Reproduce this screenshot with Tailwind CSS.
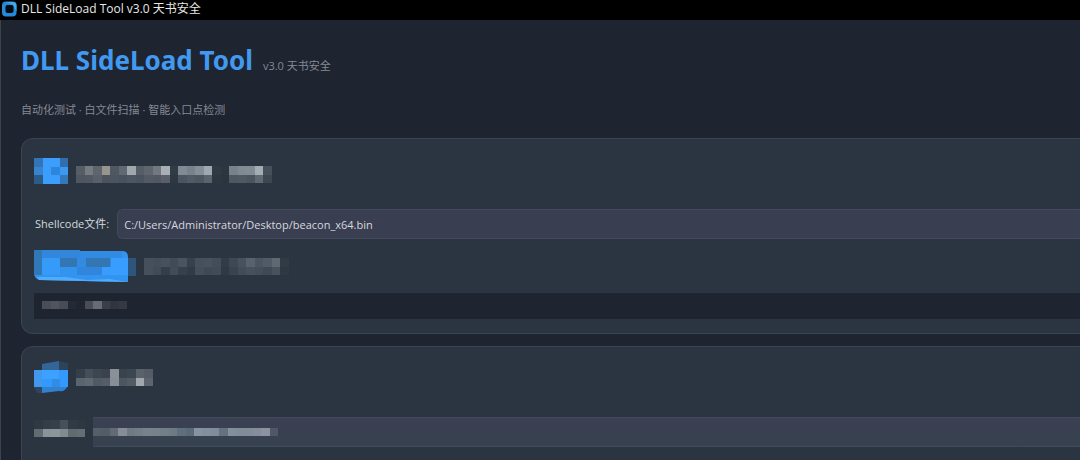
<!DOCTYPE html>
<html lang="zh-CN">
<head>
  <meta charset="UTF-8">
  <meta name="viewport" content="width=device-width, initial-scale=1.0">
  <title>DLL SideLoad Tool v3.0 天书安全</title>
  <script src="https://cdn.jsdelivr.net/npm/@tailwindcss/browser@4"></script>
</head>
<body class="flex h-screen flex-col overflow-hidden bg-[#1e2430] font-['Open_Sans','Noto_Sans_CJK_SC',sans-serif] text-[11px] leading-4 text-[#d5d9df]">
  <header class="flex h-5 shrink-0 items-center gap-1 bg-black pb-0.5 pl-px text-xs leading-4 text-[#e8e8e8]">
    <svg class="h-4 w-4" viewBox="0 0 16 16">
      <rect x="1" y="0.5" width="14.5" height="15" rx="4" fill="#2389d8"/>
      <path d="M5 1h7a3.500 3.500 0 0 1 3.500 3.500v6L12 4z" fill="#3fa9ee"/>
      <rect x="4.500" y="4" width="8" height="8" rx="2" fill="#050a12"/>
    </svg>
    <span>DLL SideLoad Tool v3.0 天书安全</span>
  </header>

  <main class="flex min-h-0 flex-1 flex-col border-l border-[#3d434d] pl-5">
    <div class="flex items-baseline gap-2.5 pt-5">
      <h1 class="font-['Noto_Sans',sans-serif] text-[26px] leading-10 font-bold text-[#4299f0]">DLL SideLoad Tool</h1>
      <span class="text-[#858a94]">v3.0 天书安全</span>
    </div>
    <p class="mt-[22px] text-[#858a94]">自动化测试 · 白文件扫描 · 智能入口点检测</p>

    <!-- shellcode card -->
    <section class="mt-5 rounded-l-xl border border-r-0 border-[#3a4350] bg-[#2b3541] pt-4 pb-3.5 pl-3">
      <div class="flex h-8 items-center gap-2">
        <svg class="mosaic h-[26px] w-[34px]" data-cells="icon1"></svg>
        <svg class="mosaic mt-1.5 h-[17px] w-[196px]" data-cells="title1"></svg>
      </div>
      <div class="mt-[22px] flex items-center gap-2 pl-px">
        <label for="shellcode">Shellcode文件:</label>
        <input id="shellcode" type="text" value="C:/Users/Administrator/Desktop/beacon_x64.bin" class="h-[30px] min-w-0 flex-1 rounded-l-md border border-r-0 border-[#434a5c] bg-[#393e50] px-1.5 text-[#d5d9df] outline-none">
      </div>
      <div class="mt-2.5 flex items-center gap-1.5">
        <button type="button">
          <svg class="block h-[34px] w-[104px]" viewBox="0 0 104 34">
            <path d="M0 1h46v1h42q6 0 6 6v25L5 31Q0 29 0 24z" fill="#3394f0"/>
            <path d="M0 1h8v25H0z" fill="#3178b8"/>
            <path d="M8 1h38v8H8z" fill="#3287dc"/>
            <path d="M46 2h42v7H46z" fill="#318be3"/>
            <path d="M8 9h18v17H8z" fill="#369af8"/>
            <path d="M26 9h51v9H26z" fill="#328be0"/>
            <path d="M26 9h17v9H26zM52 9h24v9H52z" fill="#3376b4"/>
            <path d="M77 9h17v17H68v-8h9z" fill="#399dff"/>
            <path d="M43 18h25v8H43z" fill="#3185dd"/>
            <path d="M3 28h28l22 3 22-1 19 3-89-2z" fill="#50acff"/>
            <path d="M94 9h8v18h-8z" fill="#2e567d"/>
          </svg>
        </button>
        <svg class="mosaic h-[17px] w-[145px]" data-cells="status"></svg>
      </div>
      <div class="mt-2.5 h-[26px] bg-[#1e2430] pt-2 pl-2">
        <svg class="mosaic h-2 w-[85px]" data-cells="log"></svg>
      </div>
    </section>

    <!-- second card, runs on to the bottom of the window -->
    <section class="mt-3 min-h-0 flex-1 rounded-tl-xl border-t border-l border-[#3a4350] bg-[#2b3541] pt-3.5 pl-3">
      <div class="flex h-8 items-center gap-2">
        <svg class="h-8 w-[34px]" viewBox="0 0 34 32">
          <path d="M8 3l17-3v9H8z" fill="#33659a"/>
          <path d="M25 0l9 2v7h-9z" fill="#2c435a"/>
          <path d="M0 9h34v17H0z" fill="#3399fc"/>
          <path d="M0 9h8v17H0z" fill="#4298ed"/>
          <path d="M8 9h17v9H8z" fill="#3da1ff"/>
          <path d="M18 18h8v8h-8z" fill="#308ce5"/>
          <path d="M8 26h25q-2 5-8 4L8 32z" fill="#3182ce"/>
          <path d="M0 26h8v6H3z" fill="#2d465d"/>
        </svg>
        <svg class="mosaic h-[17px] w-[77px]" data-cells="title2"></svg>
      </div>
      <div class="mt-6 flex items-center gap-2">
        <svg class="mosaic mb-2 h-[17px] w-[51px]" data-cells="label2"></svg>
        <div class="relative flex-1">
          <input type="text" class="block h-[30px] w-full border-y border-[#434b5a] bg-linear-to-b from-[#3b4052] to-[#36424f] outline-none">
          <svg class="mosaic absolute top-[11px] left-0 h-2 w-[185px]" data-cells="value2"></svg>
        </div>
      </div>
    </section>
  </main>

  <script>
    // one string per row of blocks
    const cells = {
      icon1: [
        '#3274b5 #3b9dfc #3b9dfc #326eaa',
        '#3783ce #3b9dfc #2e86dc #3b98f3',
        '#2d5b88 #3b9dfc #3b9dfc #3278ba'
      ],
      title1: [
        '#555d67 #777c83 #5f656d #989591 #4e5861 #606972 #a0a7ad #555d66 #60666d #737880 #aaaeb5 #303b46 #828b94 #77828c #858f98 #a0a8b0 #2f3a45 #2c3641 #77828b #808a92 #828c93 #a5adb4 #46505b',
        '#4d5661 #505863 #59606a #4b535f #4b555f #48515d #4c5661 #49525e #525a65 #515863 #59606b #2d3843 #4b5561 #505b66 #4d5762 #5b636e #2d3742 #2b3540 #4d5863 #4f5964 #4a5560 #606973 #3c4752'
      ],
      status: [
        '#46505b #444e5a #47515c #404b57 #4a535f #36414c #46505b #48525d #424d58 #313c47 #3d4853 #47525d #59626c #4b555f #515b65 #606972 #303b46',
        '#46505b #414b57 #333e49 #424c58 #35404c #303b46 #444e59 #3e4954 #404b56 #2e3944 #38434e #424c58 #47515d #434e59 #3e4955 #48525d #2e3843'
      ],
      log: ['#494d58 #50545e #484c57 #242a35 #20262f #484d56 #686b73 #3a3e49 #303540 #353944'],
      title2: [
        '#343f4a #444e59 #3b4651 #38434e #8a9098 #38434e #3c4651 #59616b #535c67',
        '#5b636d #606871 #505a64 #555e68 #888e96 #4c5660 #525c66 #a2a7ad #5c646e'
      ],
      label2: [
        '#2e3944 #323d48 #35404b #46505a #303b46 #2d3843',
        '#606b72 #8a9498 #8c959a #808b90 #606a71 #646e75'
      ],
      value2: ['#555f6b #525d68 #606b75 #858e97 #707a84 #747e88 #78828c #77818b #737e88 #6e7a86 #5f6f7e #5b6a79 #8793a0 #838f9c #808c99 #66717f #858f9c #828b98 #828b98 #858e9b #8b94a0 #505767']
    };

    document.querySelectorAll('.mosaic').forEach(svg => {
      const rows = cells[svg.dataset.cells].map(row => row.split(' '));
      svg.setAttribute('viewBox', `0 0 ${rows[0].length} ${rows.length}`);
      svg.setAttribute('preserveAspectRatio', 'none');
      svg.setAttribute('shape-rendering', 'crispEdges');
      svg.innerHTML = rows.map((row, y) => row.map((fill, x) =>
        `<rect x="${x}" y="${y}" width="1" height="1" fill="${fill}"/>`
      ).join('')).join('');
    });
  </script>
</body>
</html>
